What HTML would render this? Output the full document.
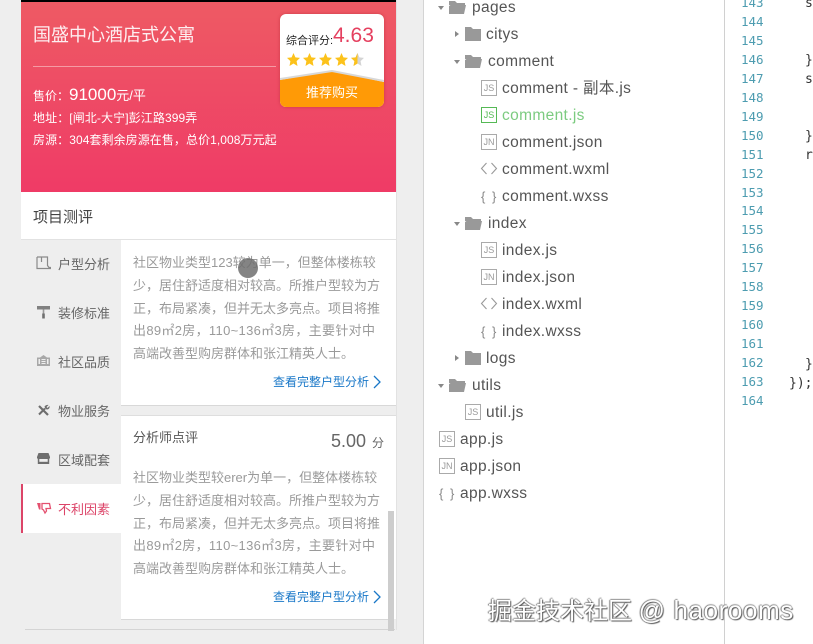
<!DOCTYPE html>
<html><head><meta charset="utf-8"><style>
html,body{margin:0;padding:0;width:813px;height:644px;overflow:hidden;background:#fff}
body{position:relative;font-family:"Liberation Sans","Noto Sans CJK SC",sans-serif}
.a{position:absolute;white-space:nowrap}
.t{position:absolute;white-space:nowrap;line-height:20px;font-size:13px;color:#fff}
.p{position:absolute;left:133px;width:250px;font-size:13px;line-height:22.8px;color:#9a9a9a;white-space:nowrap}
.p i{font-style:normal;letter-spacing:.32px}
.n{position:absolute;left:58px;font-size:13px;line-height:20px;color:#666;white-space:nowrap}
.lk{position:absolute;left:273px;font-size:12px;line-height:18px;color:#1a78c8;white-space:nowrap}
.f{position:absolute;font-size:15.5px;line-height:20px;color:#555;white-space:nowrap;letter-spacing:.35px;margin-top:1px}
.b{position:absolute;font-size:13px;line-height:20px;color:#888;white-space:nowrap;letter-spacing:1.5px;margin-top:1px}
.ln{position:absolute;left:741px;font-family:"DejaVu Sans Mono","Liberation Mono",monospace;font-size:12.5px;line-height:18.95px;color:#4d9cb0}
.c{position:absolute;font-family:"DejaVu Sans Mono","Liberation Mono",monospace;font-size:13px;line-height:19px;color:#333;white-space:nowrap}
svg{position:absolute;overflow:visible}
.ic{position:absolute;width:14px;height:14px;border:1px solid #aaa;font:9px/14px "Liberation Sans",sans-serif;color:#999;text-align:center;background:#fff}
</style></head><body>
<div class="a" style="left:0;top:0;width:423px;height:644px;background:#eeeeee"></div>
<div class="a" style="left:423px;top:0;width:1px;height:644px;background:#d4d4d4"></div>
<div class="a" style="left:724px;top:0;width:1px;height:644px;background:#d0d0d0"></div>
<div class="a" style="left:396px;top:0;width:1px;height:630px;background:#e2e2e2"></div>

<div class="a" style="left:21px;top:0;width:375px;height:2px;background:#000"></div>
<div class="a" style="left:21px;top:2px;width:375px;height:190px;background:linear-gradient(#ee5a64,#ef3b66)"></div>
<div class="a" style="left:21px;top:192px;width:375px;height:47px;background:#fff"></div>
<div class="a" style="left:21px;top:239px;width:375px;height:1px;background:#e2e2e2"></div>

<div class="t" style="left:33px;top:25px;font-size:18px;color:#fdeef0">国盛中心酒店式公寓</div>
<div class="a" style="left:33px;top:66px;width:243px;height:1px;background:#f59aa4"></div>
<div class="t" style="left:33px;top:85px;font-size:12px">售价：<span style="font-size:17px">91000</span><span style="font-size:13px">元/平</span></div>
<div class="t" style="left:33px;top:108px;font-size:12px;letter-spacing:.1px">地址：[闸北-大宁]彭江路399弄</div>
<div class="t" style="left:33px;top:130px;font-size:12px;letter-spacing:.07px">房源：304套剩余房源在售，总价1,008万元起</div>

<div class="a" style="left:280px;top:14px;width:104px;height:93px;border-radius:6px;background:#fff;overflow:hidden;box-shadow:0 0 3px rgba(190,50,60,.7)">
<svg width="104" height="93" style="left:0;top:0">
<polygon points="0,66 52,57 104,68 104,93 0,93" fill="#ff9a06"/>
<polyline points="0,65 52,57 104,67" fill="none" stroke="#d8d8d8" stroke-width="2"/>
</svg>
<div class="t" style="left:0;width:104px;text-align:center;top:69px;font-size:13px;line-height:20px">推荐购买</div>
<div class="t" style="left:6px;top:17px;font-size:11px;color:#222">综合评分:</div>
<div class="t" style="left:53px;top:7px;font-size:21px;line-height:30px;color:#e5405f">4.63</div>
</div>
<svg width="90" height="14" style="left:287px;top:53px">
<defs><polygon id="s" points="6.5,0 8.4,4.4 13,4.9 9.6,8.1 10.5,13 6.5,10.5 2.5,13 3.4,8.1 0,4.9 4.6,4.4"/></defs>
<use href="#s" x="0" fill="#fcc21b"/><use href="#s" x="16" fill="#fcc21b"/><use href="#s" x="32" fill="#fcc21b"/><use href="#s" x="48" fill="#fcc21b"/><use href="#s" x="64" fill="#d4d4d4"/>
<polygon points="70.5,0 68.6,4.4 64,4.9 67.4,8.1 66.5,13 70.5,10.5" fill="#fcc21b"/>
</svg>

<div class="t" style="left:33px;top:208px;font-size:15px;color:#444">项目测评</div>

<!-- left nav -->
<div class="a" style="left:21px;top:484px;width:100px;height:49px;background:#fff"></div>
<div class="a" style="left:21px;top:484px;width:2px;height:49px;background:#dc4468"></div>
<svg width="16" height="15" style="left:36px;top:256px" fill="none" stroke="#8a8a8a" stroke-width="1.2"><path d="M1 1h10.5v8.500l1.500 2h2M1 1v11.500h14M5.500 1v5"/></svg>
<div class="n" style="top:255px">户型分析</div>
<svg width="15" height="13" style="left:37px;top:306px"><path d="M0 0h13v3.500H0z" fill="#808080"/><path d="M5.700 3.500h1.600v4H5.700z" fill="#999"/><path d="M5.200 7.500h2.600v5H5.200z" fill="#707070"/></svg>
<div class="n" style="top:304px">装修标准</div>
<svg width="13" height="11" style="left:37px;top:355px"><path d="M6.500 0L10 2.500h3V11H0V2.500h3z" fill="#a8a8a8"/><path d="M4.500 4h4v1h-4zM4.500 6h4v1h-4zM4.500 8h4v1h-4zM1.500 4h1.500v5H1.500zM10 4h1.500v5H10z" fill="#eee"/></svg>
<div class="n" style="top:353px">社区品质</div>
<svg width="13" height="12" style="left:37px;top:404px" stroke="#6e6e6e" fill="none"><path d="M2 2l9 9" stroke-width="2.200"/><path d="M2 10.500L8 4.500" stroke-width="2"/><path d="M7.500 2.500c1-1.500 3-2 4-1.500L9.500 3l1 1 2-2c.5 1.500-.5 3.500-2.500 3.500L8.500 5z" fill="#6e6e6e" stroke="none"/></svg>
<div class="n" style="top:402px">物业服务</div>
<svg width="13" height="11" style="left:37px;top:453px"><path d="M1.500 0h10L13 4v1.500H0V4z" fill="#6e6e6e"/><path d="M.8 5h11.400v6H.8z" fill="#6e6e6e"/><path d="M2.300 6h8.400v2.800H2.300z" fill="#eee"/></svg>
<div class="n" style="top:451px">区域配套</div>
<svg width="15" height="12" style="left:37px;top:502px"><path d="M0 1h3.500v6.500H2z" fill="#e4506f"/><path d="M5 1.500h7.500l1 5H9l.5 2.500L8 11 6.500 8 5 7z" fill="none" stroke="#e4506f" stroke-width="1.300"/></svg>
<div class="n" style="top:500px;color:#dc4468">不利因素</div>

<!-- cards -->
<div class="a" style="left:121px;top:240px;width:275px;height:165px;background:#fff"></div>
<div class="a" style="left:121px;top:405px;width:275px;height:1px;background:#d8d8d8"></div>
<div class="a" style="left:121px;top:415px;width:275px;height:204px;background:#fff;border-top:1px solid #dedede;box-sizing:border-box"></div>
<div class="a" style="left:121px;top:619px;width:268px;height:1px;background:#d8d8d8"></div>
<div class="a" style="left:25px;top:629px;width:370px;height:1px;background:#d4d4d4"></div>
<div class="a" style="left:388px;top:511px;width:6px;height:120px;background:#cdcdcd"></div>

<div class="p" style="top:252px">社区物业类型123较为单一，但整体楼栋较<br>少，居住舒适度相对较高。所推户型较为方<br>正，布局紧凑，但并无太多亮点。项目将推<br><i>出89㎡2房，110~136㎡3房，主要针对中</i><br>高端改善型购房群体和张江精英人士。</div>
<div class="a" style="left:238px;top:258px;width:20px;height:20px;border-radius:50%;background:rgba(110,110,110,.85)"></div>
<div class="lk" style="top:373px">查看完整户型分析</div>
<svg width="8" height="12" style="left:373px;top:376px" fill="none" stroke="#1a78c8" stroke-width="1.3"><path d="M1 0l6 6-6 6"/></svg>

<div class="t" style="left:133px;top:428px;font-size:13px;color:#555">分析师点评</div>
<div class="t" style="left:331px;top:431px;font-size:18px;color:#666">5.00 <span style="font-size:12px;margin-left:1px">分</span></div>
<div class="p" style="top:467px">社区物业类型较erer为单一，但整体楼栋较<br>少，居住舒适度相对较高。所推户型较为方<br>正，布局紧凑，但并无太多亮点。项目将推<br><i>出89㎡2房，110~136㎡3房，主要针对中</i><br>高端改善型购房群体和张江精英人士。</div>
<div class="lk" style="top:588px">查看完整户型分析</div>
<svg width="8" height="12" style="left:373px;top:591px" fill="none" stroke="#1a78c8" stroke-width="1.3"><path d="M1 0l6 6-6 6"/></svg>

<!-- file tree -->
<svg width="300" height="520" style="left:424px;top:0" >
<defs>
<g id="fo"><path d="M0 5V1h6l2 2h8v2H5L3 7z" fill="#999"/><path d="M0 14V6h3l1-1h13l-2 9z" fill="#999"/></g>
<path id="fc" d="M0 0h6l2 2h8v12H0z" fill="#999"/>
<path id="do" d="M0 0h6l-3 4z" fill="#888"/>
<path id="ri" d="M0 0l4 3-4 3z" fill="#888"/>
<path id="ab" d="M6 0L1 5.500 6 11M11 0l5 5.500L11 11" fill="none" stroke="#999" stroke-width="1.100"/>
</defs>
<use href="#do" x="14" y="6"/><use href="#fo" x="25" y="0"/>
<use href="#ri" x="31" y="31"/><use href="#fc" x="41" y="27"/>
<use href="#do" x="30" y="60"/><use href="#fo" x="41" y="54"/>
<use href="#do" x="30" y="222"/><use href="#fo" x="41" y="216"/>
<use href="#ri" x="31" y="355"/><use href="#fc" x="41" y="351"/>
<use href="#do" x="14" y="384"/><use href="#fo" x="25" y="378"/>
<use href="#ab" x="56.500" y="163"/><use href="#ab" x="56.500" y="298"/>
</svg>
<div class="f" style="left:472px;top:-3px">pages</div>
<div class="f" style="left:486px;top:24px">citys</div>
<div class="f" style="left:488px;top:51px">comment</div>
<div class="ic" style="left:481px;top:80px">JS</div><div class="f" style="left:502px;top:78px">comment - 副本.js</div>
<div class="ic" style="left:481px;top:107px;border-color:#55b955;color:#55b955">JS</div><div class="f" style="left:502px;top:105px;color:#7ccb80">comment.js</div>
<div class="ic" style="left:481px;top:134px">JN</div><div class="f" style="left:502px;top:132px">comment.json</div>
<div class="f" style="left:502px;top:159px">comment.wxml</div>
<div class="b" style="left:481px;top:186px">{ }</div><div class="f" style="left:502px;top:186px">comment.wxss</div>
<div class="f" style="left:488px;top:213px">index</div>
<div class="ic" style="left:481px;top:242px">JS</div><div class="f" style="left:502px;top:240px">index.js</div>
<div class="ic" style="left:481px;top:269px">JN</div><div class="f" style="left:502px;top:267px">index.json</div>
<div class="f" style="left:502px;top:294px">index.wxml</div>
<div class="b" style="left:481px;top:321px">{ }</div><div class="f" style="left:502px;top:321px">index.wxss</div>
<div class="f" style="left:486px;top:348px">logs</div>
<div class="f" style="left:472px;top:375px">utils</div>
<div class="ic" style="left:465px;top:404px">JS</div><div class="f" style="left:486px;top:402px">util.js</div>
<div class="ic" style="left:439px;top:431px">JS</div><div class="f" style="left:460px;top:429px">app.js</div>
<div class="ic" style="left:439px;top:458px">JN</div><div class="f" style="left:460px;top:456px">app.json</div>
<div class="b" style="left:439px;top:483px">{ }</div><div class="f" style="left:460px;top:483px">app.wxss</div>

<!-- code -->
<div class="ln" style="top:-6px">143<br>144<br>145<br>146<br>147<br>148<br>149<br>150<br>151<br>152<br>153<br>154<br>155<br>156<br>157<br>158<br>159<br>160<br>161<br>162<br>163<br>164</div>
<div class="c" style="left:805px;top:-6px">s</div>
<div class="c" style="left:805px;top:51px">}</div>
<div class="c" style="left:805px;top:70px">s</div>
<div class="c" style="left:805px;top:127px">}</div>
<div class="c" style="left:805px;top:146px">r</div>
<div class="c" style="left:805px;top:355px">}</div>
<div class="c" style="left:789px;top:374px">});</div>

<div class="a" style="left:488px;top:595px;font-size:24px;line-height:30px;color:#fff;text-shadow:1px 1px 1px #555,-1px 0 1px #777,0 -1px 1px #999">掘金技术社区 <span style="font-size:26px;letter-spacing:.6px">@ haorooms</span></div>
</body></html>
